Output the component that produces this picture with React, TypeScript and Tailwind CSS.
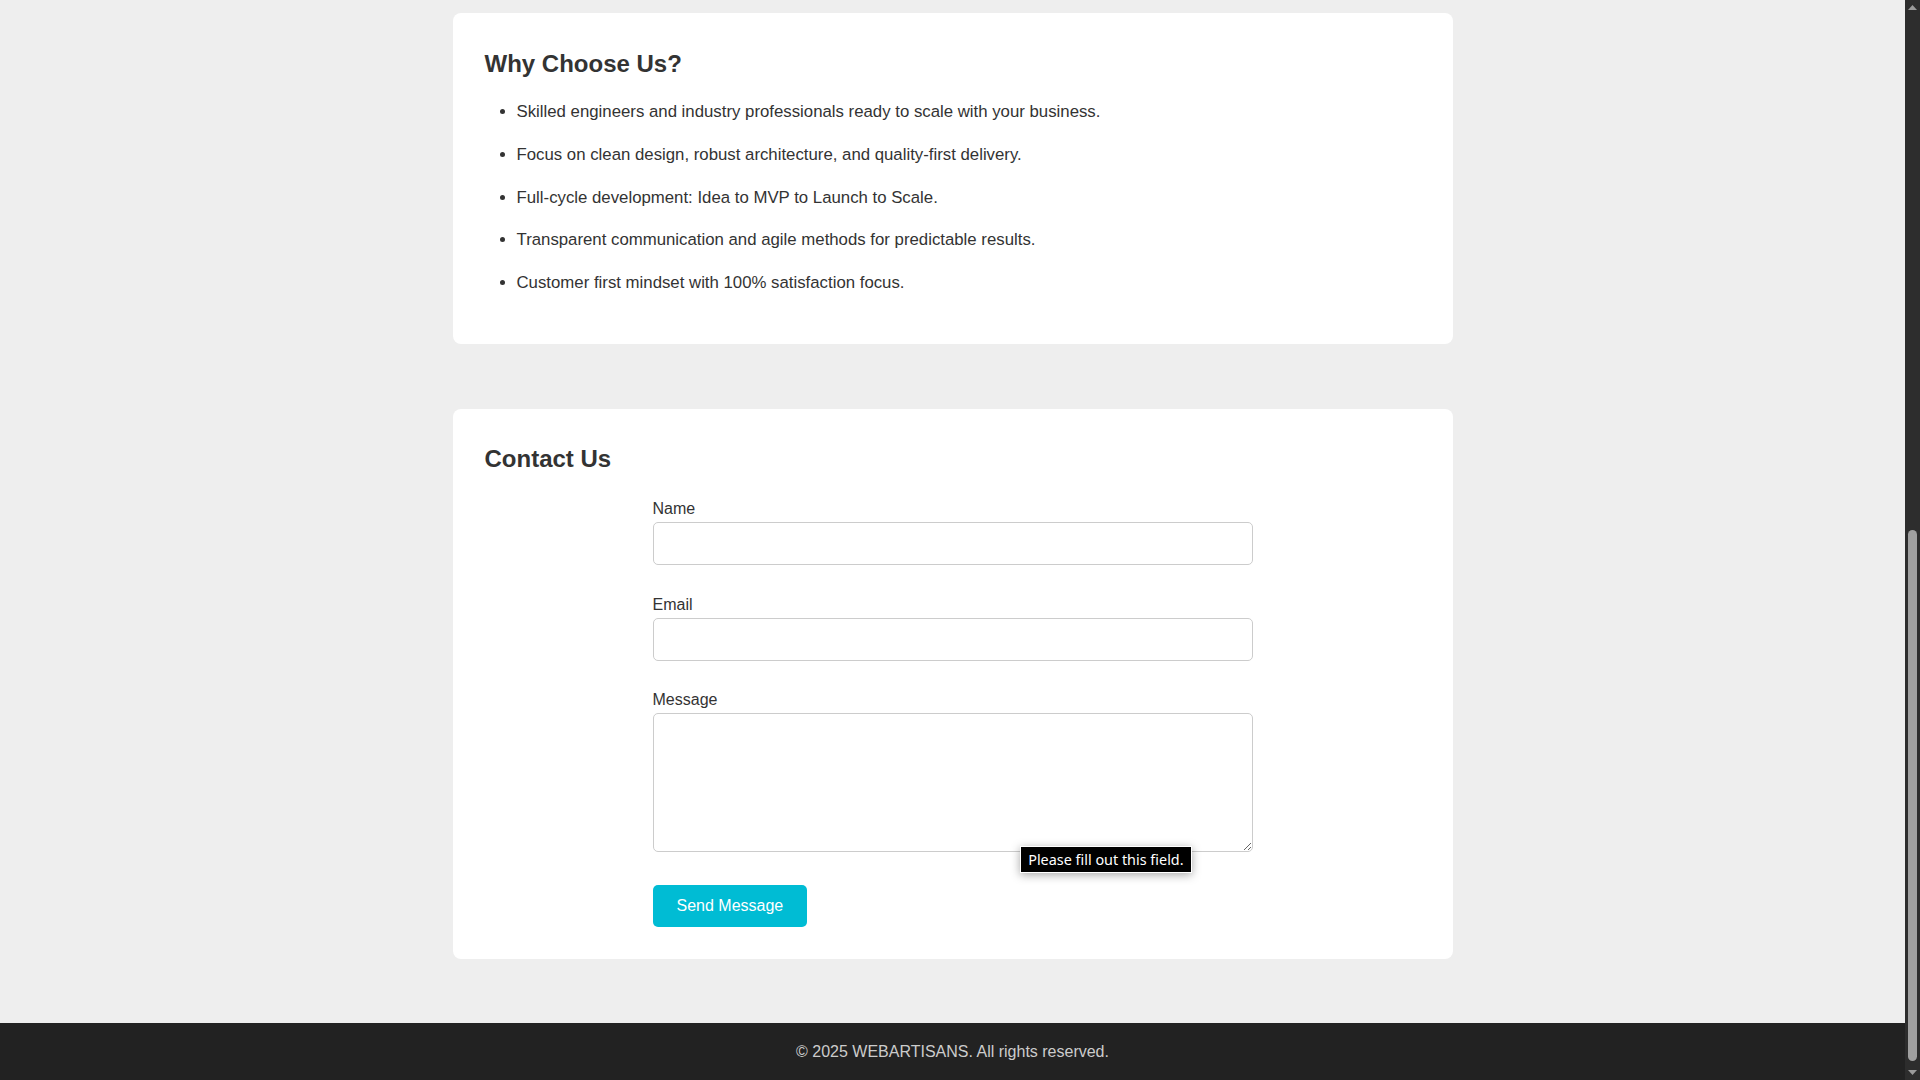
import React from "react";

const reasons = [
  "Skilled engineers and industry professionals ready to scale with your business.",
  "Focus on clean design, robust architecture, and quality-first delivery.",
  "Full-cycle development: Idea to MVP to Launch to Scale.",
  "Transparent communication and agile methods for predictable results.",
  "Customer first mindset with 100% satisfaction focus.",
];

function Scrollbar() {
  return (
    <div className="w-[15px] shrink-0 h-screen bg-[#2d2d2d] flex flex-col" aria-hidden="true">
      <div className="h-[15px] flex items-center justify-center">
        <svg width="9" height="5" viewBox="0 0 9 5">
          <path d="M0 5 L4.5 0 L9 5 Z" fill="#9a9a9a" />
        </svg>
      </div>
      <div className="flex-1 flex flex-col justify-end px-[3px] pb-[4px]">
        <div className="h-[531px] rounded-full bg-[#a0a0a0]" />
      </div>
      <div className="h-[15px] flex items-center justify-center">
        <svg width="9" height="5" viewBox="0 0 9 5">
          <path d="M0 0 L4.5 5 L9 0 Z" fill="#9a9a9a" />
        </svg>
      </div>
    </div>
  );
}

export default function App() {
  return (
    <div className="h-screen overflow-hidden flex bg-[#eeeeee] text-[#333333] [font-family:'Liberation_Sans',Arial,sans-serif]">
      <div className="flex-1 min-w-0 pt-[13.3px]">
        <section className="max-w-[1000px] mx-auto bg-white rounded-lg px-8 pt-[33px] pb-[32.5px] mb-[64.7px]">
          <h2 className="text-[24px] font-bold leading-[36px] mb-4">Why Choose Us?</h2>
          <ul className="list-disc pl-8">
            {reasons.map((r) => (
              <li key={r} className="text-[16.8px] leading-[28px] mb-[14.7px]">
                {r}
              </li>
            ))}
          </ul>
        </section>

        <section className="max-w-[1000px] mx-auto bg-white rounded-lg px-8 pt-[32.5px] pb-[32px] mb-16">
          <h2 className="text-[24px] font-bold leading-[36px] mb-[19px]">Contact Us</h2>
          <form className="max-w-[600px] mx-auto" onSubmit={(e) => e.preventDefault()}>
            <label htmlFor="name" className="block text-base leading-[25.6px]">
              Name
            </label>
            <input
              id="name"
              type="text"
              className="block w-full h-[43px] border border-[#cccccc] rounded-[5px] bg-white px-3 mb-[27px] outline-none"
            />
            <label htmlFor="email" className="block text-base leading-[25.6px]">
              Email
            </label>
            <input
              id="email"
              type="email"
              className="block w-full h-[43px] border border-[#cccccc] rounded-[5px] bg-white px-3 mb-[26.3px] outline-none"
            />
            <label htmlFor="message" className="block text-base leading-[25.6px]">
              Message
            </label>
            <div className="relative mb-[32.8px]">
              <textarea
                id="message"
                className="block w-full h-[139.4px] border border-[#cccccc] rounded-[5px] bg-white px-3 py-2 outline-none"
              />
              <div className="absolute left-[367.7px] top-[133.4px] h-[27px] px-[7px] bg-black border border-white text-white text-[14.4px] leading-[25px] whitespace-nowrap shadow-[0_2px_10px_rgba(0,0,0,0.35)] [font-family:'Noto_Sans',sans-serif]">
                Please fill out this field.
              </div>
            </div>
            <button
              type="submit"
              className="h-[42px] px-6 bg-[#00bcd4] text-white text-base rounded-[5px]"
            >
              Send Message
            </button>
          </form>
        </section>

        <footer className="bg-[#222222] text-[#cccccc] text-center py-4 text-base leading-[25.6px]">
          © 2025 WEBARTISANS. All rights reserved.
        </footer>
      </div>
      <Scrollbar />
    </div>
  );
}
